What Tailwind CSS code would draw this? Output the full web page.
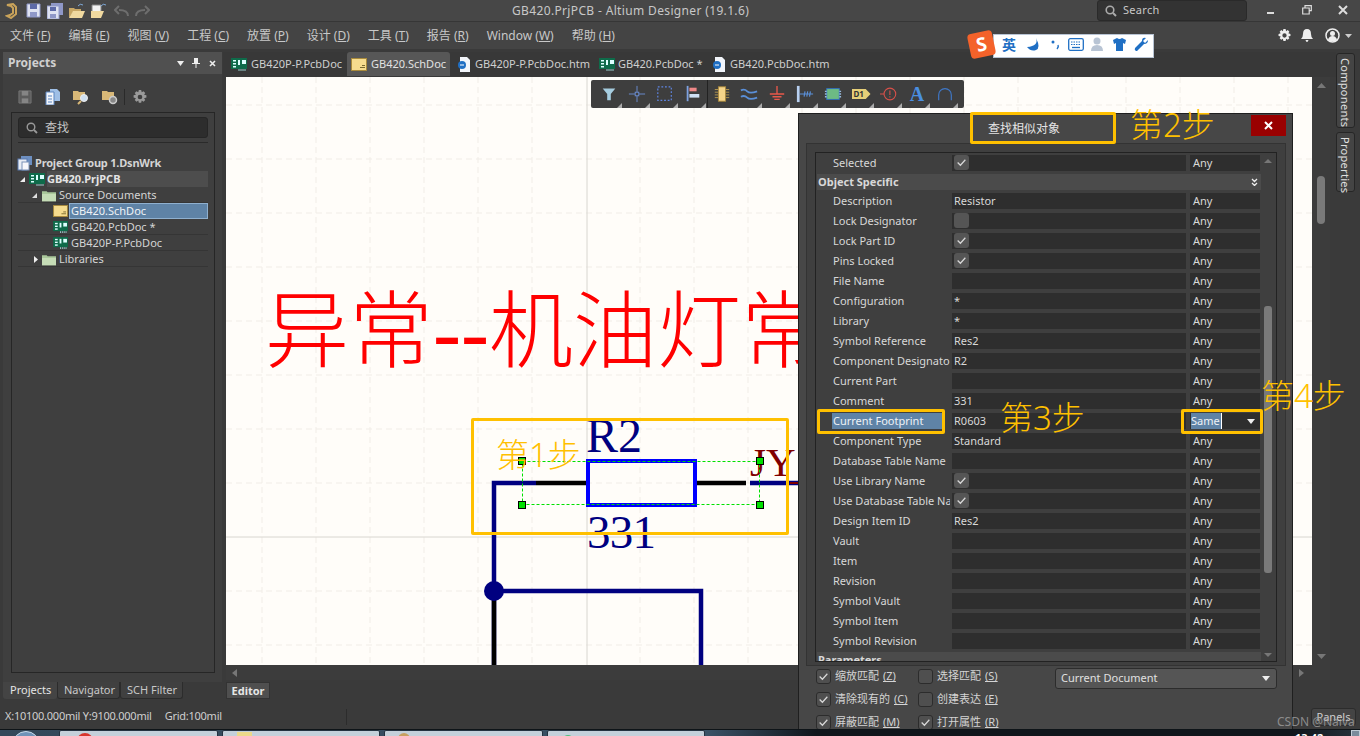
<!DOCTYPE html>
<html lang="zh">
<head>
<meta charset="utf-8">
<title>GB420.PrjPCB - Altium Designer</title>
<script src="https://cdn.jsdelivr.net/npm/@tailwindcss/browser@4"></script>
</head>
<body class="bg-[#3a3a3a] overflow-hidden [font-family:'Noto_Sans','Noto_Sans_CJK_SC',sans-serif] text-[11px] text-[#d8d8d8]">

<!-- shared icons -->
<svg class="hidden">
  <symbol id="pcb" viewBox="0 0 16 13"><rect width="16" height="11" fill="#0e6b4a"/><rect x="2" y="2" width="3" height="1.5" fill="#dff"/><rect x="2" y="5" width="3" height="1.5" fill="#dff"/><rect x="2" y="8" width="3" height="1.5" fill="#dff"/><rect x="7" y="2" width="2" height="5" fill="#dff"/><rect x="11" y="2" width="4" height="4" fill="#dff"/><path d="M8 11v2M10 11v2M12 11v2M14 11v2" stroke="#9cc" /></symbol>
  <symbol id="sch" viewBox="0 0 16 13"><rect x=".5" y=".5" width="15" height="12" fill="#f6dc8e" stroke="#a88a3c"/><path d="M9 9.500h5M11 7.500h3" stroke="#7a6a30"/></symbol>
  <symbol id="folder" viewBox="0 0 15 13"><path d="M0 2h5l1 1h9v10H0z" fill="#a9c79a"/><path d="M0 5h15v8H0z" fill="#c5dcb6"/></symbol>
  <symbol id="ie" viewBox="0 0 14 15"><path d="M3 0h7l3 3v12H3z" fill="#f2f5fa"/><circle cx="5" cy="8" r="4" fill="#1f6fc4"/><path d="M3 8h4" stroke="#fff"/></symbol>
  <symbol id="check" viewBox="0 0 10 10"><path d="M1.500 5l2.500 2.500 4.500-5" fill="none" stroke="#d8d8d8" stroke-width="1.100"/></symbol>
  <symbol id="tri" viewBox="0 0 5 5"><path d="M5 0v5H0z" fill="#aaa"/></symbol>
</svg>

<div class="flex flex-col w-[1360px] h-[736px] relative">

  <!-- title bar -->
  <div class="flex items-center h-[22px] bg-[#474747] border-b border-[#363636] shrink-0">
    <div class="flex items-center w-[512px] pl-[5px]">
      <svg class="w-3 h-4" viewBox="0 0 12 16"><path d="M2 2l6-1 3 3v7l-5 4-4-2 3-1 3-2V5L6 3z" fill="none" stroke="#c9a35a" stroke-width="2"/></svg>
      <svg class="w-[15px] h-[15px] ml-[9px]" viewBox="0 0 15 15"><path d="M1 1h13v13H1z" fill="#dfe3f2" stroke="#8f98c8"/><rect x="4" y="1" width="7" height="5" fill="#5d6aa8"/><rect x="4" y="9" width="7" height="5" fill="#8f98c8"/></svg>
      <svg class="w-4 h-4 ml-[6px]" viewBox="0 0 16 16"><path d="M4 0h12v12H4z" fill="#8f98c8"/><path d="M0 3h12v13H0z" fill="#dfe3f2" stroke="#8f98c8"/><rect x="3" y="4" width="6" height="4" fill="#5d6aa8"/><rect x="3" y="11" width="6" height="4" fill="#8f98c8"/></svg>
      <svg class="w-4 h-4 ml-[6px]" viewBox="0 0 16 16"><path d="M0 5h5l1 1h6v3H4l-4 6z" fill="#c8a765"/><path d="M4 8h12l-3 7H0z" fill="#f0d9a0"/><path d="M9 3q2-3 5-1" fill="none" stroke="#7fa9d8"/></svg>
      <svg class="w-4 h-4 ml-[6px]" viewBox="0 0 16 16"><path d="M1 2h9v8H1z" fill="#f3f3f3" stroke="#888"/><path d="M0 8h6l7 0-3 7H0z" fill="#f0d9a0"/><path d="M10 3q2-3 5-1" fill="none" stroke="#7fa9d8"/></svg>
      <svg class="w-[15px] h-[13px] ml-[7px]" viewBox="0 0 15 13"><path d="M14 12q0-6-9-6M5 2L1 6l4 4" fill="none" stroke="#6e6e6e" stroke-width="2"/></svg>
      <svg class="w-[15px] h-[13px] ml-[6px]" viewBox="0 0 15 13"><path d="M1 12q0-6 9-6M10 2l4 4-4 4" fill="none" stroke="#6e6e6e" stroke-width="2"/></svg>
    </div>
    <span class="text-[12px] tracking-[.35px] text-[#c8c8c8] whitespace-nowrap">GB420.PrjPCB - Altium Designer (19.1.6)</span>
    <div class="flex items-center ml-auto mr-[113px] w-[150px] h-[21px] bg-[#333] border border-[#2a2a2a] rounded-[3px] pl-[7px] gap-[6px] text-[#c8c8c8]">
      <svg class="w-[12px] h-[12px]" viewBox="0 0 12 12"><circle cx="5" cy="5" r="3.800" fill="none" stroke="#aaa" stroke-width="1.600"/><path d="M8 8l3 3" stroke="#aaa" stroke-width="2"/></svg>
      <span class="tracking-[.3px]">Search</span>
    </div>
    <!-- window buttons sit at the far right -->
    <div class="absolute right-[12px] top-[5px] flex items-center gap-[26px]">
      <svg class="w-[10px] h-[10px]" viewBox="0 0 10 10"><rect x="1" y="7" width="7" height="2" fill="#ddd"/></svg>
      <svg class="w-[10px] h-[10px]" viewBox="0 0 10 10"><path d="M3 2.500V.7h6.300v5H7.500M.7 3h6.500v6H.7z" fill="none" stroke="#ddd" stroke-width="1.200"/></svg>
      <svg class="w-[10px] h-[10px]" viewBox="0 0 10 10"><path d="M1 1l8 8M9 1l-8 8" stroke="#ddd" stroke-width="2"/></svg>
    </div>
  </div>

  <!-- menu bar -->
  <div class="flex items-center h-[27px] bg-[#444] pl-[10px] gap-[18px] text-[12px] text-[#c8c8c8] shrink-0">
    <span>文件 (<u>F</u>)</span>
    <span>编辑 (<u>E</u>)</span>
    <span>视图 (<u>V</u>)</span>
    <span>工程 (<u>C</u>)</span>
    <span>放置 (<u>P</u>)</span>
    <span>设计 (<u>D</u>)</span>
    <span>工具 (<u>T</u>)</span>
    <span>报告 (<u>R</u>)</span>
    <span>Window (<u>W</u>)</span>
    <span>帮助 (<u>H</u>)</span>
    <div class="flex items-center gap-[10px] ml-auto mr-[8px]">
      <svg class="w-[13px] h-[13px]" viewBox="0 0 24 24"><path fill="#eee" d="M10 0h4l1 4 3-2 3 3-2 3 4 1v4l-4 1 2 3-3 3-3-2-1 4h-4l-1-4-3 2-3-3 2-3-4-1v-4l4-1-2-3 3-3 3 2zM12 8a4 4 0 100 8 4 4 0 000-8z"/></svg>
      <svg class="w-[12px] h-[13px]" viewBox="0 0 12 13"><path fill="#eee" d="M6 0q4 0 4 5 0 3 2 5H0q2-2 2-5 0-5 4-5zM4.500 11h3Q7 13 6 13t-1.500-2z"/></svg>
      <svg class="w-[15px] h-[15px] ml-[2px]" viewBox="0 0 15 15"><circle cx="7.500" cy="7.500" r="6.500" fill="none" stroke="#eee" stroke-width="1.500"/><circle cx="7.500" cy="5.500" r="2.500" fill="#eee"/><path d="M3 12q1-4 4.500-4t4.500 4q-4 3-9 0z" fill="#eee"/></svg>
      <svg class="w-[7px] h-[4px] -ml-[5px]" viewBox="0 0 7 4"><path d="M0 0h7L3.500 4z" fill="#ccc"/></svg>
    </div>
  </div>

  <!-- main area -->
  <div class="flex flex-1 min-h-0 pt-[3px]">

    <!-- projects panel -->
    <div class="flex flex-col w-[226px] pl-[3px] pr-[4px] pb-[6px] shrink-0">
      <div class="flex items-center h-[22px] bg-[#505050] pl-[5px] pr-[6px] font-bold text-[12px] text-[#d0d0d0]">
        <span>Projects</span>
        <svg class="ml-auto w-[7px] h-[5px]" viewBox="0 0 7 5"><path d="M0 0h7L3.500 5z" fill="#eee"/></svg>
        <svg class="ml-[8px] w-[8px] h-[10px]" viewBox="0 0 8 10"><path d="M2 0h4v5h2v1H4.500v4h-1V6H0V5h2z" fill="#eee"/></svg>
        <svg class="ml-[9px] w-[7px] h-[7px]" viewBox="0 0 7 7"><path d="M1 1l5 5M6 1L1 6" stroke="#eee" stroke-width="1.600"/></svg>
      </div>
      <div class="flex-1 flex flex-col bg-[#3f3f3f] pl-2 pr-[7px] pb-[9px]">
        <div class="flex items-center h-[38px] gap-[13px] pl-[7px] pt-[8px]">
          <svg class="w-[14px] h-[14px]" viewBox="0 0 15 15"><path d="M1 1h13v13H1z" fill="#5c5c5c" stroke="#777"/><rect x="4" y="1" width="7" height="5" fill="#858585"/><rect x="4" y="9" width="7" height="5" fill="#858585"/></svg>
          <svg class="w-[15px] h-[16px]" viewBox="0 0 15 16"><path d="M5 0h7l3 3v9H5z" fill="#9fbfe6"/><path d="M1 3h8v13H1z" fill="#f2f5fa" stroke="#5a85c0"/><path d="M3 7h4M3 10h4M3 13h4" stroke="#5a85c0"/></svg>
          <svg class="w-4 h-[15px]" viewBox="0 0 16 15"><path d="M0 1h5l1 1h6v8H0z" fill="#d8b878"/><circle cx="11" cy="8" r="3.500" fill="#cfe0f0" stroke="#eee"/><path d="M8 11l-3 3" stroke="#d8b878" stroke-width="2"/></svg>
          <svg class="w-4 h-[15px]" viewBox="0 0 16 15"><path d="M0 1h5l1 1h6v8H0z" fill="#d8b878"/><circle cx="11" cy="10" r="3.500" fill="#888" stroke="#ccc" stroke-width="1.500"/></svg>
          <div class="w-px h-[16px] bg-[#2a2a2a] -ml-[7px] -mr-[5px]"></div>
          <svg class="w-[14px] h-[14px]" viewBox="0 0 24 24"><path fill="#9a9a9a" d="M10 0h4l1 4 3-2 3 3-2 3 4 1v4l-4 1 2 3-3 3-3-2-1 4h-4l-1-4-3 2-3-3 2-3-4-1v-4l4-1-2-3 3-3 3 2zM12 8a4 4 0 100 8 4 4 0 000-8z"/></svg>
        </div>
        <div class="flex-1 border border-[#262626] pt-[4px] px-[6px]">
          <div class="flex items-center h-[21px] bg-[#2d2d2d] border border-[#262626] rounded-[3px] pl-[7px] gap-[7px] text-[12px] text-[#c4c4c4]">
            <svg class="w-[12px] h-[12px]" viewBox="0 0 12 12"><circle cx="5" cy="5" r="3.800" fill="none" stroke="#999" stroke-width="1.400"/><path d="M8 8l3 3" stroke="#999" stroke-width="1.800"/></svg>
            <span>查找</span>
          </div>
          <div class="h-[5px] border-b border-[#2a2a2a]"></div>
          <div class="flex flex-col mt-[12px] text-[#d4d4d4]">
            <div class="flex items-center h-4 font-bold -ml-[1px] gap-[2px] whitespace-nowrap tracking-[-.2px]">
              <svg class="w-4 h-[15px]" viewBox="0 0 16 15"><rect x="4" y="0" width="11" height="9" fill="#6d8fc0"/><rect x="1" y="3" width="9" height="11" fill="#e8ecf4" stroke="#5a7ab0"/><rect x="5" y="6" width="7" height="8" fill="#f7f7fb" stroke="#7a92b8"/></svg>
              <span>Project Group 1.DsnWrk</span>
            </div>
            <div class="flex items-center h-4 font-bold whitespace-nowrap">
              <svg class="w-[5px] h-[5px] ml-[2px]" viewBox="0 0 5 5"><path d="M5 0v5H0z" fill="#eee"/></svg>
              <svg class="w-4 h-[13px] ml-[4px]" viewBox="0 0 16 13"><use href="#pcb"/></svg>
              <span class="ml-[2px] flex-1 bg-[#4d4d4d] leading-4 text-[#e4e4e4]">GB420.PrjPCB</span>
            </div>
            <div class="flex items-center h-4 pt-px whitespace-nowrap border-b border-[#353535]">
              <svg class="w-[5px] h-[5px] ml-[14px]" viewBox="0 0 5 5"><path d="M5 0v5H0z" fill="#ddd"/></svg>
              <svg class="w-[14px] h-[13px] ml-[5px]" viewBox="0 0 15 13"><use href="#folder"/></svg>
              <span class="ml-[3px]">Source Documents</span>
            </div>
            <div class="flex items-center h-4 whitespace-nowrap">
              <svg class="w-[15px] h-[12px] ml-[35px]" viewBox="0 0 16 13"><use href="#sch"/></svg>
              <span class="ml-[1px] flex-1 bg-[#5f83a6] border border-[#8fb0cf] pl-[1px] leading-[14px] text-[#eef2f6]">GB420.SchDoc</span>
            </div>
            <div class="flex items-center h-4 pt-px whitespace-nowrap border-b border-[#353535]">
              <svg class="w-[15px] h-[12px] ml-[35px]" viewBox="0 0 16 13"><use href="#pcb"/></svg>
              <span class="ml-[3px]">GB420.PcbDoc *</span>
            </div>
            <div class="flex items-center h-4 pt-px whitespace-nowrap border-b border-[#353535]">
              <svg class="w-[15px] h-[12px] ml-[35px]" viewBox="0 0 16 13"><use href="#pcb"/></svg>
              <span class="ml-[3px]">GB420P-P.PcbDoc</span>
            </div>
            <div class="flex items-center h-4 pt-px whitespace-nowrap border-b border-[#353535]">
              <svg class="w-[4px] h-[7px] ml-[16px]" viewBox="0 0 4 7"><path d="M0 0l4 3.500L0 7z" fill="#eee"/></svg>
              <svg class="w-[14px] h-[13px] ml-[4px]" viewBox="0 0 15 13"><use href="#folder"/></svg>
              <span class="ml-[3px]">Libraries</span>
            </div>
          </div>
        </div>
      </div>
      <div class="flex h-[17px] text-[#c8c8c8] bg-[#3a3a3a]">
        <div class="w-[54px] pl-[7px] leading-[16px] bg-[#444] rounded-b-[3px] text-[#e4e4e4]">Projects</div>
        <div class="w-[63px] pl-[6px] leading-[16px] bg-[#404040] border border-t-0 border-[#2c2c2c] rounded-b-[3px]">Navigator</div>
        <div class="w-[63px] pl-[6px] leading-[16px] bg-[#404040] border border-t-0 border-[#2c2c2c] rounded-b-[3px]">SCH Filter</div>
      </div>
    </div>

    <!-- documents and editor -->
    <div class="flex flex-col flex-1 min-w-0">
      <div class="flex items-start h-[25px] -ml-[3px] bg-[#383838] text-[#cfcfcf] whitespace-nowrap">
        <div class="flex items-center h-[24px] w-[124px] gap-[4px] pl-[8px]"><svg class="w-4 h-[13px]" viewBox="0 0 16 13"><use href="#pcb"/></svg>GB420P-P.PcbDoc</div>
        <div class="flex items-center h-[24px] w-[103px] gap-[4px] pl-[4px] bg-[#575757] rounded-t-[3px] text-[#e2e2e2]"><svg class="w-4 h-[13px]" viewBox="0 0 16 13"><use href="#sch"/></svg>GB420.SchDoc</div>
        <div class="flex items-center h-[24px] w-[144px] gap-[4px] pl-[7px]"><svg class="w-[14px] h-[15px]" viewBox="0 0 14 15"><use href="#ie"/></svg>GB420P-P.PcbDoc.htm</div>
        <div class="flex items-center h-[24px] w-[113px] gap-[3px] pl-[5px]"><svg class="w-4 h-[13px]" viewBox="0 0 16 13"><use href="#pcb"/></svg>GB420.PcbDoc *</div>
        <div class="flex items-center h-[24px] gap-[4px] pl-[5px]"><svg class="w-[14px] h-[15px]" viewBox="0 0 14 15"><use href="#ie"/></svg>GB420.PcbDoc.htm</div>
      </div>

      <div class="flex flex-1 min-h-0">
        <div class="flex flex-col flex-1 min-w-0">
          <!-- schematic sheet -->
          <div class="relative h-[588px] w-[1086px] bg-[#fffdf9] overflow-hidden shrink-0">
            <svg class="absolute inset-0" width="1086" height="588" viewBox="226 77 1086 588">
              <g stroke="#f1ede7" stroke-dasharray="6 4" fill="none">
                <path d="M262 77v588M316 77v588M370 77v588M424 77v588M478 77v588M532 77v588M640 77v588M694 77v588M748 77v588M802 77v588M856 77v588M910 77v588M964 77v588M1018 77v588M1072 77v588M1126 77v588M1180 77v588M1234 77v588M1288 77v588"/>
                <path d="M226 105h1086M226 159h1086M226 213h1086M226 267h1086M226 321h1086M226 375h1086M226 429h1086M226 483h1086M226 591h1086M226 645h1086"/>
              </g>
              <path d="M587 77v588M226 537h1086" stroke="#d8d6d0"/>
              <text x="265" y="361" font-size="84" fill="#ff0000" font-family="'Liberation Serif','Noto Sans CJK SC',serif" font-weight="300">异常--机油灯常</text>
              <path d="M494 665V483h42M750 483h50M494 591h207v74" fill="none" stroke="#000080" stroke-width="4.500"/>
              <path d="M494 600v65M536 483h50M697 483h49" stroke="#000" stroke-width="4.500"/>
              <circle cx="494" cy="591" r="10" fill="#000080"/>
              <rect x="588" y="461" width="107" height="44" fill="none" stroke="#0000ff" stroke-width="4"/>
              <text x="586" y="452" font-size="48" fill="#000080" font-family="'Liberation Serif',serif">R2</text>
              <text x="587" y="548" font-size="47" fill="#000080" font-family="'Liberation Serif',serif" textLength="69">331</text>
              <text x="750" y="476" font-size="41" fill="#800000" font-family="'Liberation Serif',serif">JY</text>
              <path d="M790 483h12" stroke="#800000" stroke-width="2"/>
              <rect x="522.500" y="461.500" width="237" height="43" fill="none" stroke="#00e000" stroke-dasharray="3 2"/>
              <g fill="#00e000" stroke="#000"><rect x="518.500" y="457.500" width="7" height="7"/><rect x="756.500" y="457.500" width="7" height="7"/><rect x="518.500" y="501.500" width="7" height="7"/><rect x="756.500" y="501.500" width="7" height="7"/></g>
            </svg>

            <!-- active bar floats over the sheet -->
            <div class="absolute left-[365px] top-[3px] flex items-center h-[28px] w-[373px] pl-[4px] bg-[#3e3e3e] rounded-[2px]">
              <div class="relative flex items-center justify-center w-[28px] h-[28px]"><svg class="w-[18px] h-[18px]" viewBox="0 0 20 20"><path d="M3 4h14l-5 6v7H8v-7z" fill="#a6cde0"/></svg><svg class="absolute right-[1px] bottom-0 w-[5px] h-[5px]"><use href="#tri"/></svg></div>
              <div class="relative flex items-center justify-center w-[28px] h-[28px]"><svg class="w-[18px] h-[18px]" viewBox="0 0 20 20"><path d="M10 1v18M1 10h18" stroke="#6c90d8"/><rect x="8" y="8" width="4" height="4" fill="#3e3e3e" stroke="#6c90d8"/></svg><svg class="absolute right-[1px] bottom-0 w-[5px] h-[5px]"><use href="#tri"/></svg></div>
              <div class="relative flex items-center justify-center w-[28px] h-[28px]"><svg class="w-[18px] h-[18px]" viewBox="0 0 20 20"><rect x="2" y="2" width="15" height="15" fill="none" stroke="#5f86e4" stroke-width="1.300" stroke-dasharray="2 2"/></svg><svg class="absolute right-[1px] bottom-0 w-[5px] h-[5px]"><use href="#tri"/></svg></div>
              <div class="relative flex items-center justify-center w-[28px] h-[28px]"><svg class="w-[18px] h-[18px]" viewBox="0 0 20 20"><rect x="3" y="1" width="2" height="17" fill="#7ea2e0"/><rect x="6" y="3" width="8" height="4" fill="#e88"/><rect x="6" y="10" width="11" height="4" fill="#cfe0f4"/></svg><svg class="absolute right-[1px] bottom-0 w-[5px] h-[5px]"><use href="#tri"/></svg></div>
              <div class="relative flex items-center justify-center w-[28px] h-[28px] border-l border-[#222]"><svg class="w-[18px] h-[18px]" viewBox="0 0 20 20"><rect x="6" y="2" width="8" height="16" fill="#f4d48a" stroke="#a8873a"/><path d="M2 5h4M2 8h4M2 11h4M2 14h4M14 5h4M14 8h4M14 11h4M14 14h4" stroke="#b89a50"/></svg></div>
              <div class="relative flex items-center justify-center w-[28px] h-[28px]"><svg class="w-[18px] h-[18px]" viewBox="0 0 20 20"><path d="M1 6q4-2 7 1t11 0M1 13q4-2 7 1t11 0" fill="none" stroke="#5a8fd8" stroke-width="2"/></svg><svg class="absolute right-[1px] bottom-0 w-[5px] h-[5px]"><use href="#tri"/></svg></div>
              <div class="relative flex items-center justify-center w-[28px] h-[28px]"><svg class="w-[18px] h-[18px]" viewBox="0 0 20 20"><path d="M10 1v9M2 10h16M5 13h10M7 16h6" stroke="#e8584a" stroke-width="1.500"/></svg><svg class="absolute right-[1px] bottom-0 w-[5px] h-[5px]"><use href="#tri"/></svg></div>
              <div class="relative flex items-center justify-center w-[28px] h-[28px]"><svg class="w-[18px] h-[18px]" viewBox="0 0 20 20"><rect x="1" y="1" width="3" height="18" fill="#b8d0f0"/><path d="M4 10h15M10 7l-1 6M13 7l-1 6M16 7l-1 6" stroke="#5a8fd8" stroke-width="1.300"/></svg><svg class="absolute right-[1px] bottom-0 w-[5px] h-[5px]"><use href="#tri"/></svg></div>
              <div class="relative flex items-center justify-center w-[28px] h-[28px]"><svg class="w-[18px] h-[18px]" viewBox="0 0 20 20"><rect x="3" y="4" width="14" height="12" fill="#6dbb84" stroke="#2f6fc0"/><path d="M1 7h2M1 10h2M1 13h2M17 7h2M17 10h2M17 13h2" stroke="#9bd" stroke-width="1.500"/></svg><svg class="absolute right-[1px] bottom-0 w-[5px] h-[5px]"><use href="#tri"/></svg></div>
              <div class="relative flex items-center justify-center w-[28px] h-[28px]"><div class="flex items-center h-[10px] w-[19px] pl-[2px] bg-[#e6cf78] text-[8px] leading-none text-[#333] font-bold [clip-path:polygon(0_0,75%_0,100%_50%,75%_100%,0_100%)]">D1</div><svg class="absolute right-[1px] bottom-0 w-[5px] h-[5px]"><use href="#tri"/></svg></div>
              <div class="relative flex items-center justify-center w-[28px] h-[28px]"><svg class="w-[18px] h-[18px]" viewBox="0 0 20 20"><circle cx="11" cy="10" r="6.500" fill="none" stroke="#d8504a" stroke-width="1.200"/><path d="M0 10h4.500M11 6v5M11 12.500v1.500" stroke="#d8504a" stroke-width="1.200"/></svg><svg class="absolute right-[1px] bottom-0 w-[5px] h-[5px]"><use href="#tri"/></svg></div>
              <div class="relative flex items-center justify-center w-[28px] h-[28px]"><span class="[font-family:'Liberation_Serif',serif] font-bold text-[20px] leading-none text-[#4a8fe0]">A</span><svg class="absolute right-[1px] bottom-0 w-[5px] h-[5px]"><use href="#tri"/></svg></div>
              <div class="relative flex items-center justify-center w-[28px] h-[28px]"><svg class="w-[18px] h-[18px]" viewBox="0 0 20 20"><path d="M3 17V11a7 7 0 0114 0v6" fill="none" stroke="#3f78c8" stroke-width="1.300"/></svg><svg class="absolute right-[1px] bottom-0 w-[5px] h-[5px]"><use href="#tri"/></svg></div>
            </div>
          </div>

          <!-- horizontal scrollbar -->
          <div class="flex items-center justify-between h-[15px] bg-[#3c3c3c] pl-[6px] pr-[8px] shrink-0">
            <svg class="w-[5px] h-[8px]" viewBox="0 0 5 8"><path d="M5 0v8L0 4z" fill="#777"/></svg>
            <svg class="w-[5px] h-[8px]" viewBox="0 0 5 8"><path d="M0 0v8l5-4z" fill="#777"/></svg>
          </div>
          <div class="h-[2px] shrink-0"></div>
          <div class="flex h-[17px] shrink-0">
            <div class="w-[44px] h-[17px] bg-[#4f4f4f] border border-[#333] text-center leading-[15px] font-bold text-[#e6e6e6]">Editor</div>
          </div>
        </div>

        <!-- vertical scrollbar -->
        <div class="flex flex-col items-center w-[18px] bg-[#3c3c3c] pt-[6px] shrink-0 h-[603px]">
          <svg class="w-[9px] h-[5px]" viewBox="0 0 9 5"><path d="M0 5h9L4.500 0z" fill="#777"/></svg>
          <div class="w-[8px] h-[48px] mt-[88px] bg-[#7a7a7a] rounded-[4px]"></div>
          <svg class="w-[9px] h-[5px] mt-auto mb-[21px]" viewBox="0 0 9 5"><path d="M0 0h9L4.500 5z" fill="#777"/></svg>
        </div>
        <div class="w-[6px] bg-[#3a3a3a] shrink-0"></div>
      </div>
    </div>

    <!-- side tabs -->
    <div class="flex flex-col w-[24px] pt-[1px] gap-[4px] shrink-0 text-[#e0e0e0] tracking-[.3px]">
      <div class="w-[19px] h-[75px] bg-[#444] border border-[#262626] rounded-[3px] [writing-mode:vertical-rl] leading-[17px] pt-[4px]">Components</div>
      <div class="w-[19px] h-[60px] bg-[#444] border border-[#262626] rounded-[3px] [writing-mode:vertical-rl] leading-[17px] pt-[4px]">Properties</div>
    </div>
  </div>

  <!-- status bar -->
  <div class="flex items-center h-[24px] bg-[#3a3a3a] pl-[5px] pb-[2px] text-[#cfcfcf] whitespace-nowrap shrink-0 relative tracking-[-.25px]">
    <span>X:10100.000mil Y:9100.000mil</span>
    <span class="ml-[13px]">Grid:100mil</span>
    <div class="w-px h-[16px] bg-[#2c2c2c] absolute left-[346px] top-[4px]"></div>
    <div class="absolute right-[4px] top-[3px] w-[45px] h-[18px] bg-[#444] border border-[#2c2c2c] rounded-[3px] text-center leading-[16px] tracking-normal">Panels</div>
  </div>

  <!-- windows taskbar, only its top edge shows -->
  <div class="relative z-20 flex gap-[4px] h-[7px] bg-[linear-gradient(90deg,#33485a_0%,#3a5266_52%,#10161c_60%,#10161c_95%,#26323c_100%)] border-t border-[#0e1418] overflow-hidden shrink-0 pl-[59px]">
    <div class="absolute left-[12px] top-[1px] w-[28px] h-[28px] rounded-full bg-[#6f93b8] border border-[#c8dcec]"></div>
    <div class="relative w-[159px] h-[7px] bg-[#c4d0da] border border-[#243240] rounded-t-[2px]"><div class="absolute left-[17px] top-[2px] w-[16px] h-[16px] rounded-full bg-[#d8342c]"></div></div>
    <div class="relative w-[158px] h-[7px] bg-[#c4d0da] border border-[#243240] rounded-t-[2px]"><div class="absolute left-[14px] top-[1px] w-[15px] h-[15px] bg-[#ecd98a]"></div></div>
    <div class="relative w-[159px] h-[7px] bg-[#c4d0da] border border-[#243240] rounded-t-[2px]"><div class="absolute left-[13px] top-[2px] w-[12px] h-[12px] rounded-full bg-[#c8a060]"></div></div>
    <div class="relative w-[158px] h-[7px] bg-[#c4d0da] border border-[#243240] rounded-t-[2px]"><div class="absolute left-[14px] top-[4px] w-[12px] h-[12px] rounded-full bg-[#4cc07a]"></div></div>
    <span class="absolute left-[1295px] top-[1px] text-white font-bold leading-[14px]">13:42</span>
    <div class="absolute right-0 top-0 w-[9px] h-[7px] bg-[#7a8c9c] border border-[#c0ccd6]"></div>
  </div>

  <!-- find similar objects dialog -->
  <div class="absolute left-[798px] top-[113px] z-10 flex flex-col w-[495px] h-[623px] bg-[#474747] border-t border-l border-r border-[#1f1f1f] overflow-hidden">
    <div class="flex items-center justify-between h-[29px] shrink-0 text-[12px] text-[#e4e4e4]">
      <span class="ml-[189px]">查找相似对象</span>
      <div class="flex items-center justify-center w-[35px] h-[21px] bg-[#990000] mr-[6px] -mt-[7px]">
        <svg class="w-[9px] h-[9px]" viewBox="0 0 9 9"><path d="M1 1l7 7M8 1L1 8" stroke="#fff" stroke-width="2"/></svg>
      </div>
    </div>
    <div class="ml-[7px] mr-[6px] h-[523px] shrink-0 bg-[#3f3f3f] border border-[#333] pl-2 pr-[8px] pt-2">
      <div class="flex h-[510px] border border-[#222] overflow-hidden">
        <div class="flex-1 flex flex-col min-w-0 pt-[2px] pl-[1px] text-[#d8d8d8]">
          <div class="flex h-4 shrink-0"><div class="w-[135px] pl-[16px] leading-4">Selected</div><div class="w-[234px] bg-[#2e2e2e] pl-[2px]"><div class="flex items-center justify-center w-[15px] h-[15px] bg-[#555] rounded-[3px]"><svg class="w-[11px] h-[11px]"><use href="#check"/></svg></div></div><div class="w-[70px] ml-1 bg-[#2e2e2e] pl-[3px] leading-4">Any</div></div>
          <div class="flex items-center justify-between h-4 mt-[3px] shrink-0 bg-[#4b4b4b] pl-[1px] pr-[3px] w-[444px] font-bold leading-4"><span>Object Specific</span><svg class="w-[7px] h-[8px]" viewBox="0 0 7 8"><path d="M1 1l2.500 2.500L6 1M1 5l2.500 2.500L6 5" fill="none" stroke="#eee" stroke-width="1.300"/></svg></div>

          <div class="flex h-4 mt-[3px] shrink-0"><div class="w-[135px] pl-[16px] leading-4">Description</div><div class="w-[234px] bg-[#2e2e2e] pl-[2px] leading-4">Resistor</div><div class="w-[70px] ml-1 bg-[#2e2e2e] pl-[3px] leading-4">Any</div></div>
          <div class="flex h-4 mt-1 shrink-0"><div class="w-[135px] pl-[16px] leading-4">Lock Designator</div><div class="w-[234px] bg-[#2e2e2e] pl-[2px]"><div class="w-[15px] h-[15px] bg-[#555] rounded-[3px]"></div></div><div class="w-[70px] ml-1 bg-[#2e2e2e] pl-[3px] leading-4">Any</div></div>
          <div class="flex h-4 mt-1 shrink-0"><div class="w-[135px] pl-[16px] leading-4">Lock Part ID</div><div class="w-[234px] bg-[#2e2e2e] pl-[2px]"><div class="flex items-center justify-center w-[15px] h-[15px] bg-[#555] rounded-[3px]"><svg class="w-[11px] h-[11px]"><use href="#check"/></svg></div></div><div class="w-[70px] ml-1 bg-[#2e2e2e] pl-[3px] leading-4">Any</div></div>
          <div class="flex h-4 mt-1 shrink-0"><div class="w-[135px] pl-[16px] leading-4">Pins Locked</div><div class="w-[234px] bg-[#2e2e2e] pl-[2px]"><div class="flex items-center justify-center w-[15px] h-[15px] bg-[#555] rounded-[3px]"><svg class="w-[11px] h-[11px]"><use href="#check"/></svg></div></div><div class="w-[70px] ml-1 bg-[#2e2e2e] pl-[3px] leading-4">Any</div></div>
          <div class="flex h-4 mt-1 shrink-0"><div class="w-[135px] pl-[16px] leading-4">File Name</div><div class="w-[234px] bg-[#2e2e2e] pl-[2px] leading-4"></div><div class="w-[70px] ml-1 bg-[#2e2e2e] pl-[3px] leading-4">Any</div></div>
          <div class="flex h-4 mt-1 shrink-0"><div class="w-[135px] pl-[16px] leading-4">Configuration</div><div class="w-[234px] bg-[#2e2e2e] pl-[2px] leading-4">*</div><div class="w-[70px] ml-1 bg-[#2e2e2e] pl-[3px] leading-4">Any</div></div>
          <div class="flex h-4 mt-1 shrink-0"><div class="w-[135px] pl-[16px] leading-4">Library</div><div class="w-[234px] bg-[#2e2e2e] pl-[2px] leading-4">*</div><div class="w-[70px] ml-1 bg-[#2e2e2e] pl-[3px] leading-4">Any</div></div>
          <div class="flex h-4 mt-1 shrink-0"><div class="w-[135px] pl-[16px] leading-4">Symbol Reference</div><div class="w-[234px] bg-[#2e2e2e] pl-[2px] leading-4">Res2</div><div class="w-[70px] ml-1 bg-[#2e2e2e] pl-[3px] leading-4">Any</div></div>
          <div class="flex h-4 mt-1 shrink-0"><div class="w-[133px] mr-[2px] pl-[16px] leading-4 overflow-hidden whitespace-nowrap">Component Designator</div><div class="w-[234px] bg-[#2e2e2e] pl-[2px] leading-4">R2</div><div class="w-[70px] ml-1 bg-[#2e2e2e] pl-[3px] leading-4">Any</div></div>
          <div class="flex h-4 mt-1 shrink-0"><div class="w-[135px] pl-[16px] leading-4">Current Part</div><div class="w-[234px] bg-[#2e2e2e] pl-[2px] leading-4"></div><div class="w-[70px] ml-1 bg-[#2e2e2e] pl-[3px] leading-4">Any</div></div>
          <div class="flex h-4 mt-1 shrink-0"><div class="w-[135px] pl-[16px] leading-4">Comment</div><div class="w-[234px] bg-[#2e2e2e] pl-[2px] leading-4">331</div><div class="w-[70px] ml-1 bg-[#2e2e2e] pl-[3px] leading-4">Any</div></div>
          <div class="flex h-4 mt-1 shrink-0"><div class="w-[135px] pl-[15px] leading-4"><div class="w-[112px] pl-[1px] bg-[#5f83a6] text-[#eef2f6]">Current Footprint</div></div><div class="w-[234px] bg-[#2e2e2e] pl-[2px] leading-4">R0603</div><div class="flex items-center w-[70px] ml-1 bg-[#2e2e2e] pl-[1px] pr-[5px] leading-4"><span class="bg-[#5f83a6] text-[#eef2f6] pr-[1px] border-r border-white">Same</span><svg class="ml-auto w-[8px] h-[5px]" viewBox="0 0 8 5"><path d="M0 0h8L4 5z" fill="#eee"/></svg></div></div>
          <div class="flex h-4 mt-1 shrink-0"><div class="w-[135px] pl-[16px] leading-4">Component Type</div><div class="w-[234px] bg-[#2e2e2e] pl-[2px] leading-4">Standard</div><div class="w-[70px] ml-1 bg-[#2e2e2e] pl-[3px] leading-4">Any</div></div>
          <div class="flex h-4 mt-1 shrink-0"><div class="w-[135px] pl-[16px] leading-4">Database Table Name</div><div class="w-[234px] bg-[#2e2e2e] pl-[2px] leading-4"></div><div class="w-[70px] ml-1 bg-[#2e2e2e] pl-[3px] leading-4">Any</div></div>
          <div class="flex h-4 mt-1 shrink-0"><div class="w-[135px] pl-[16px] leading-4">Use Library Name</div><div class="w-[234px] bg-[#2e2e2e] pl-[2px]"><div class="flex items-center justify-center w-[15px] h-[15px] bg-[#555] rounded-[3px]"><svg class="w-[11px] h-[11px]"><use href="#check"/></svg></div></div><div class="w-[70px] ml-1 bg-[#2e2e2e] pl-[3px] leading-4">Any</div></div>
          <div class="flex h-4 mt-1 shrink-0"><div class="w-[133px] mr-[2px] pl-[16px] leading-4 overflow-hidden whitespace-nowrap">Use Database Table Name</div><div class="w-[234px] bg-[#2e2e2e] pl-[2px]"><div class="flex items-center justify-center w-[15px] h-[15px] bg-[#555] rounded-[3px]"><svg class="w-[11px] h-[11px]"><use href="#check"/></svg></div></div><div class="w-[70px] ml-1 bg-[#2e2e2e] pl-[3px] leading-4">Any</div></div>
          <div class="flex h-4 mt-1 shrink-0"><div class="w-[135px] pl-[16px] leading-4">Design Item ID</div><div class="w-[234px] bg-[#2e2e2e] pl-[2px] leading-4">Res2</div><div class="w-[70px] ml-1 bg-[#2e2e2e] pl-[3px] leading-4">Any</div></div>
          <div class="flex h-4 mt-1 shrink-0"><div class="w-[135px] pl-[16px] leading-4">Vault</div><div class="w-[234px] bg-[#2e2e2e] pl-[2px] leading-4"></div><div class="w-[70px] ml-1 bg-[#2e2e2e] pl-[3px] leading-4">Any</div></div>
          <div class="flex h-4 mt-1 shrink-0"><div class="w-[135px] pl-[16px] leading-4">Item</div><div class="w-[234px] bg-[#2e2e2e] pl-[2px] leading-4"></div><div class="w-[70px] ml-1 bg-[#2e2e2e] pl-[3px] leading-4">Any</div></div>
          <div class="flex h-4 mt-1 shrink-0"><div class="w-[135px] pl-[16px] leading-4">Revision</div><div class="w-[234px] bg-[#2e2e2e] pl-[2px] leading-4"></div><div class="w-[70px] ml-1 bg-[#2e2e2e] pl-[3px] leading-4">Any</div></div>
          <div class="flex h-4 mt-1 shrink-0"><div class="w-[135px] pl-[16px] leading-4">Symbol Vault</div><div class="w-[234px] bg-[#2e2e2e] pl-[2px] leading-4"></div><div class="w-[70px] ml-1 bg-[#2e2e2e] pl-[3px] leading-4">Any</div></div>
          <div class="flex h-4 mt-1 shrink-0"><div class="w-[135px] pl-[16px] leading-4">Symbol Item</div><div class="w-[234px] bg-[#2e2e2e] pl-[2px] leading-4"></div><div class="w-[70px] ml-1 bg-[#2e2e2e] pl-[3px] leading-4">Any</div></div>
          <div class="flex h-4 mt-1 shrink-0"><div class="w-[135px] pl-[16px] leading-4">Symbol Revision</div><div class="w-[234px] bg-[#2e2e2e] pl-[2px] leading-4"></div><div class="w-[70px] ml-1 bg-[#2e2e2e] pl-[3px] leading-4">Any</div></div>
          <div class="flex items-center justify-between h-4 mt-[3px] shrink-0 bg-[#4b4b4b] pl-[1px] pr-[3px] w-[444px] font-bold leading-4"><span>Parameters</span></div>
        </div>
        <div class="flex flex-col items-center w-4 shrink-0 pt-[6px] pb-[4px]">
          <svg class="w-[8px] h-[4px]" viewBox="0 0 8 4"><path d="M0 4h8L4 0z" fill="#777"/></svg>
          <div class="w-[8px] h-[267px] mt-[143px] bg-[#7a7a7a] rounded-[3px]"></div>
          <svg class="w-[8px] h-[4px] mt-auto" viewBox="0 0 8 4"><path d="M0 0h8L4 4z" fill="#777"/></svg>
        </div>
      </div>
    </div>

    <!-- options under the table -->
    <div class="flex ml-[17px] mt-[3px] text-[#d4d4d4] whitespace-nowrap">
      <div class="flex flex-col gap-[8px] w-[102px]">
        <div class="flex items-center h-[15px] gap-[4px]"><div class="flex items-center justify-center w-[15px] h-[15px] bg-[#4f4f4f] border border-[#2c2c2c] rounded-[3px]"><svg class="w-[11px] h-[11px]"><use href="#check"/></svg></div>缩放匹配 <u>(Z)</u></div>
        <div class="flex items-center h-[15px] gap-[4px]"><div class="flex items-center justify-center w-[15px] h-[15px] bg-[#4f4f4f] border border-[#2c2c2c] rounded-[3px]"><svg class="w-[11px] h-[11px]"><use href="#check"/></svg></div>清除现有的 <u>(C)</u></div>
        <div class="flex items-center h-[15px] gap-[4px]"><div class="flex items-center justify-center w-[15px] h-[15px] bg-[#4f4f4f] border border-[#2c2c2c] rounded-[3px]"><svg class="w-[11px] h-[11px]"><use href="#check"/></svg></div>屏蔽匹配 <u>(M)</u></div>
      </div>
      <div class="flex flex-col gap-[8px] w-[137px]">
        <div class="flex items-center h-[15px] gap-[4px]"><div class="w-[15px] h-[15px] bg-[#4f4f4f] border border-[#2c2c2c] rounded-[3px]"></div>选择匹配 <u>(S)</u></div>
        <div class="flex items-center h-[15px] gap-[4px]"><div class="w-[15px] h-[15px] bg-[#4f4f4f] border border-[#2c2c2c] rounded-[3px]"></div>创建表达 <u>(E)</u></div>
        <div class="flex items-center h-[15px] gap-[4px]"><div class="flex items-center justify-center w-[15px] h-[15px] bg-[#4f4f4f] border border-[#2c2c2c] rounded-[3px]"><svg class="w-[11px] h-[11px]"><use href="#check"/></svg></div>打开属性 <u>(R)</u></div>
      </div>
      <div class="flex items-center justify-between w-[222px] h-[21px] -mt-[1px] bg-[#555] border border-[#2c2c2c] rounded-[3px] pl-[5px] pr-[6px] text-[#e0e0e0]">
        <span>Current Document</span>
        <svg class="w-[8px] h-[5px]" viewBox="0 0 8 5"><path d="M0 0h8L4 5z" fill="#eee"/></svg>
      </div>
    </div>
  </div>

  <!-- sogou input method bar -->
  <div class="absolute left-[969px] top-[31px] z-10 flex items-center w-[185px] h-[27px]">
    <div class="absolute left-[24px] top-[3px] w-[161px] h-[24px] bg-white border border-[#b8c4d4]"></div>
    <div class="relative flex items-center justify-center w-[25px] h-[25px] bg-[#f4622a] rounded-[4px] -rotate-12 text-white font-bold text-[19px] leading-none">S</div>
    <div class="relative flex items-center ml-[8px] gap-[7px] text-[#1f6fc4] font-bold text-[14px] leading-none">
      <span>英</span>
      <svg class="w-[15px] h-[15px] ml-[3px]" viewBox="0 0 15 15"><path d="M10 1q3 8-9 9 4 5 9 3t0-12z" fill="#1f6fc4"/></svg>
      <svg class="w-[9px] h-[15px] ml-[3px]" viewBox="0 0 9 15"><circle cx="2" cy="5" r="1.500" fill="#1f6fc4"/><path d="M7 8q1 2-1 4" stroke="#1f6fc4" stroke-width="1.500" fill="none"/></svg>
      <svg class="w-4 h-[13px] ml-[1px]" viewBox="0 0 16 13"><rect x=".7" y=".7" width="14.600" height="11.600" rx="1.500" fill="none" stroke="#1f6fc4" stroke-width="1.300"/><path d="M3 4h10M3 6.500h10" stroke="#1f6fc4" stroke-dasharray="1.500 1"/><path d="M4 9.500h8" stroke="#1f6fc4" stroke-width="1.300"/></svg>
      <svg class="w-[14px] h-4" viewBox="0 0 14 16"><circle cx="6" cy="4" r="3.500" fill="#b8c4d4"/><path d="M0 14q0-6 6-6t6 6z" fill="#b8c4d4"/></svg>
      <svg class="w-[15px] h-[15px]" viewBox="0 0 15 15"><path d="M5 1L1 3l1 4 2-1v8h7V6l2 1 1-4-4-2q-2.500 2-5 0z" fill="#1f6fc4"/></svg>
      <svg class="w-[15px] h-[15px]" viewBox="0 0 15 15"><path d="M14 3l-3 3-2-2 3-3Q8 0 8 4L1 11q-1 2 1 3l1 0 7-7q4 0 4-4z" fill="#1f6fc4"/></svg>
    </div>
  </div>

  <!-- tutorial markup drawn on top of the screenshot -->
  <div class="absolute left-[471px] top-[418px] z-10 w-[318px] h-[117px] border-[3px] border-[#ffc000] rounded-[2px]"></div>
  <div class="absolute left-[970px] top-[112px] z-10 w-[146px] h-[32px] border-[3px] border-[#ffc000] rounded-[2px]"></div>
  <div class="absolute left-[817px] top-[409px] z-10 w-[128px] h-[25px] border-[3px] border-[#ffc000] rounded-[2px]"></div>
  <div class="absolute left-[1181px] top-[409px] z-10 w-[82px] h-[25px] border-[3px] border-[#ffc000] rounded-[2px]"></div>
  <span class="absolute left-[496px] top-[433px] z-10 text-[#ffc000] text-[33px] leading-[44px] font-light whitespace-nowrap">第1步</span>
  <span class="absolute left-[1130px] top-[103px] z-10 text-[#ffc000] text-[33px] leading-[44px] font-light whitespace-nowrap">第2步</span>
  <span class="absolute left-[1000px] top-[396px] z-10 text-[#ffc000] text-[33px] leading-[44px] font-light whitespace-nowrap">第3步</span>
  <span class="absolute left-[1261px] top-[374px] z-10 text-[#ffc000] text-[33px] leading-[44px] font-light whitespace-nowrap">第4步</span>

  <!-- watermark -->
  <span class="absolute left-[1277px] top-[713px] z-10 text-[#a0a0a0]/80 text-[12px] whitespace-nowrap">CSDN @Naiva</span>
</div>
</body>
</html>
